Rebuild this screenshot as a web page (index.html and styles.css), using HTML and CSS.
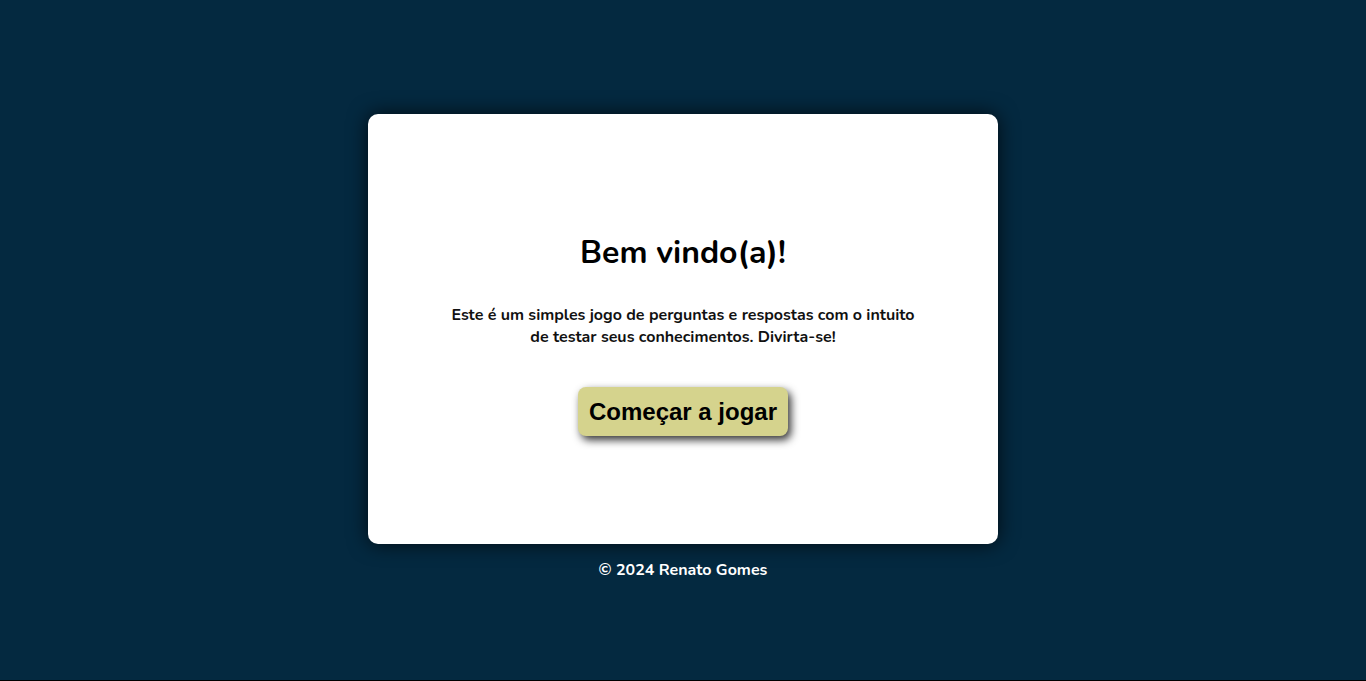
FILE: index.html
```html
<!DOCTYPE html>
<html lang="pt-BR">
<head>
<meta charset="utf-8">
<title>Quiz</title>
<link rel="stylesheet" href="styles.css">
</head>
<body>
<main class="page">
  <section class="card">
    <h1 class="title">Bem vindo(a)!</h1>
    <p class="intro">Este é um simples jogo de perguntas e respostas com o intuito de testar seus conhecimentos. Divirta-se!</p>
    <button class="start">Começar a jogar</button>
  </section>
  <footer class="footer">© 2024 Renato Gomes</footer>
</main>
</body>
</html>
```
FILE: styles.css
```css
html, body {
  margin: 0;
  padding: 0;
  height: 100%;
}
body {
  background: #042940;
  font-family: "Nunito", "Lato", "Noto Sans", sans-serif;
  border-bottom: 1px solid #000;
  box-sizing: border-box;
}
.page {
  display: flex;
  flex-direction: column;
  align-items: center;
  padding-top: 114px;
}
.card {
  width: 630px;
  height: 430px;
  background: #fff;
  border-radius: 10px;
  box-shadow: 0 0 20px rgba(0, 0, 0, 0.75);
  display: flex;
  flex-direction: column;
  align-items: center;
  justify-content: center;
  padding-top: 8px;
  box-sizing: border-box;
}
.title {
  margin: 3px 0 0;
  font-size: 32px;
  font-weight: 700;
  color: #000;
  line-height: 40px;
}
.intro {
  width: 480px;
  margin: 31px 0 0;
  text-align: center;
  font-size: 16px;
  font-weight: 700;
  line-height: 22px;
  color: #111;
}
.start {
  margin-top: 39px;
  width: 210px;
  height: 49px;
  border: none;
  border-radius: 8px;
  background: #d5d38d;
  font-family: "Liberation Sans", Arial, sans-serif;
  font-weight: 700;
  font-size: 24px;
  color: #000;
  box-shadow: 3px 4px 8px rgba(0, 0, 0, 0.8);
  cursor: pointer;
  padding: 0;
}
.footer {
  margin-top: 16px;
  color: #fff;
  font-weight: 700;
  font-size: 16px;
  line-height: 20px;
}
```
